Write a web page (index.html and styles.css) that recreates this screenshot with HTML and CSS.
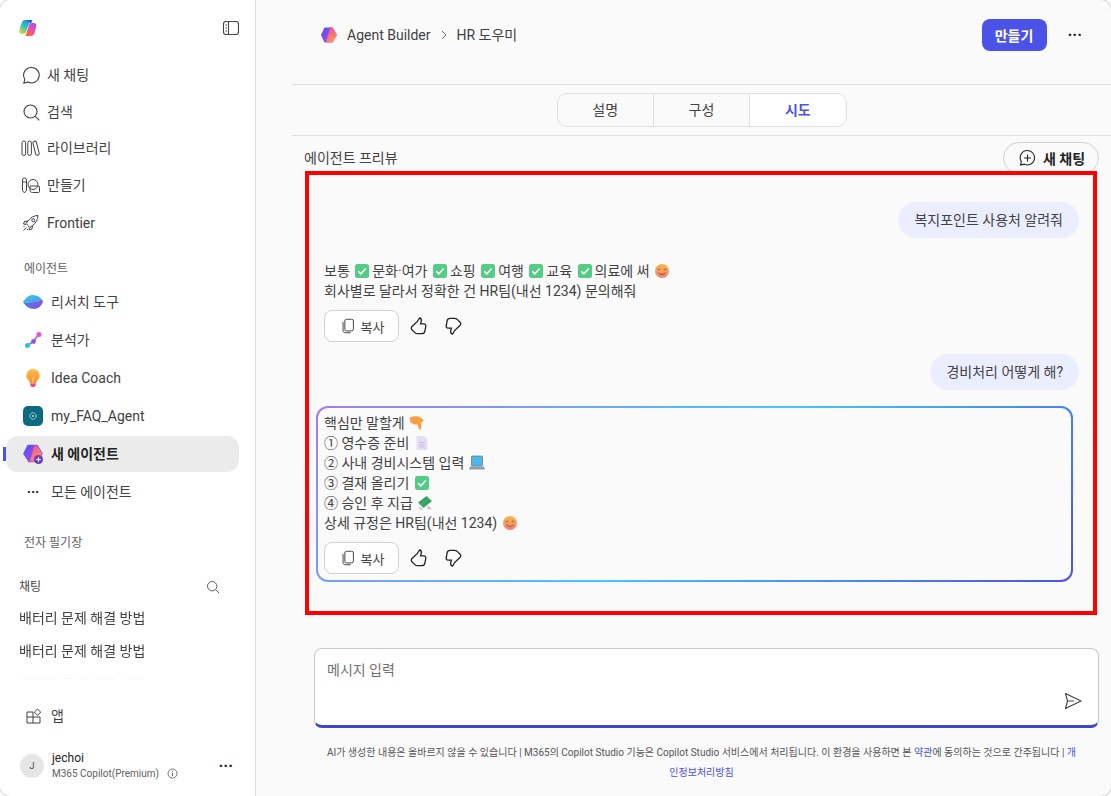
FILE: index.html
```html
<!DOCTYPE html>
<html lang="ko">

<head>
    <meta charset="UTF-8">
    <meta name="viewport" content="width=device-width, initial-scale=1.0">
    <link rel="stylesheet" href="styles.css">
</head>

<body>
    <svg class="defs" width="0" height="0">
        <defs>
            <linearGradient id="gHexA" x1="0" y1="0" x2="1" y2="1">
                <stop offset="0" stop-color="#5b4cf0" />
                <stop offset="1" stop-color="#b04ce8" />
            </linearGradient>
            <linearGradient id="gHexB" x1="0" y1="0" x2="0.6" y2="1">
                <stop offset="0" stop-color="#e83ea8" />
                <stop offset="1" stop-color="#ff9a5a" />
            </linearGradient>
            <linearGradient id="gCoLeft" x1="0.7" y1="0" x2="0.2" y2="1">
                <stop offset="0" stop-color="#1f8fe0" />
                <stop offset="0.5" stop-color="#35c8b8" />
                <stop offset="1" stop-color="#e8d830" />
            </linearGradient>
            <linearGradient id="gCoRight" x1="0.8" y1="0" x2="0.2" y2="1">
                <stop offset="0" stop-color="#a850f0" />
                <stop offset="0.55" stop-color="#f050a0" />
                <stop offset="1" stop-color="#f86a30" />
            </linearGradient>
            <linearGradient id="gLeafTop" x1="0" y1="0" x2="1" y2="1">
                <stop offset="0" stop-color="#35d0e8" />
                <stop offset="1" stop-color="#4f8df0" />
            </linearGradient>
            <linearGradient id="gLeafBot" x1="0" y1="0" x2="1" y2="0">
                <stop offset="0" stop-color="#4f7de8" />
                <stop offset="1" stop-color="#8a4fd8" />
            </linearGradient>
            <linearGradient id="gBulb" x1="0" y1="0" x2="0" y2="1">
                <stop offset="0" stop-color="#ffc24a" />
                <stop offset="1" stop-color="#f58a2e" />
            </linearGradient>
            <linearGradient id="gSmile" x1="0" y1="0" x2="0" y2="1">
                <stop offset="0" stop-color="#fbb848" />
                <stop offset="1" stop-color="#f47e78" />
            </linearGradient>
            <symbol id="check" viewBox="0 0 16 16">
                <rect x="1" y="1" width="14" height="14" rx="2.500" fill="#55cc85" />
                <path d="M4.200 8.200l2.600 2.600 5-5.400" fill="none" stroke="#fff" stroke-width="1.500" />
            </symbol>
            <symbol id="smile" viewBox="0 0 16 16">
                <circle cx="8" cy="8" r="7" fill="url(#gSmile)" />
                <path d="M3.800 6.800c.6-1 1.800-1 2.400 0M9.800 6.800c.6-1 1.800-1 2.400 0" fill="none" stroke="#8a4a28" stroke-width="0.900" />
                <path d="M4.500 9.500c1.600 2.600 5.400 2.600 7 0" fill="none" stroke="#8a4a28" stroke-width="0.900" />
            </symbol>
            <symbol id="pointdown" viewBox="0 0 16 16">
                <path d="M1 2.500C3 1.500 6 1 8.500 1.500c1.800.3 4 1.300 5.200 2.500.8.800.8 2-.2 2.700l-1.200.8-.3 6c-.1 1.300-1.900 1.500-2.300.2L8.500 9.500c-2.200.3-4.800-.2-6-1.400C1 6.800.3 4 1 2.500z" fill="#f8a040" />
            </symbol>
            <symbol id="doc" viewBox="0 0 16 16">
                <path d="M2.500 1h7.500l3.500 3.500V15h-11z" fill="#e4dff2" />
                <path d="M5 7.500h6M5 9.800h6M5 12h6" stroke="#c6bfe0" stroke-width="1" />
            </symbol>
            <symbol id="laptop" viewBox="0 0 16 16">
                <rect x="2.500" y="1" width="11" height="10" rx="1" fill="#4bb8e8" stroke="#5a6c80" stroke-width="0.700" />
                <path d="M1 11.500h14l1 3H0z" fill="#8f9bab" />
            </symbol>
            <symbol id="money" viewBox="0 0 16 16">
                <path d="M10 10l5 3.500-4 1.500zM1.500 11l1.500 4 3.500-.5z" fill="#c3ccd6" />
                <path d="M1 7.500L9.500 1l5.500 5-8.500 7z" fill="#3fa866" />
                <path d="M3.500 8L9.500 3.500M6 10.500l6-4.500" stroke="#2d8a50" stroke-width="0.800" />
            </symbol>
            <symbol id="copy" viewBox="0 0 20 20">
                <rect x="6.500" y="2.500" width="9.500" height="13" rx="2" fill="none" stroke="currentColor" stroke-width="1.100" />
                <path d="M4.500 5.500v9.500c0 1.400 1 2.500 2.500 2.500h6" fill="none" stroke="currentColor" stroke-width="1.100" />
            </symbol>
            <symbol id="thumb" viewBox="0 0 20 20">
                <path d="M10.500 2c1.500.2 2 1.400 1.800 2.900-.1 1-.4 2-.7 3h3.300c1.300 0 2.200 1.100 1.900 2.300l-1 5.300c-.3 1.300-1.300 2.200-2.700 2.200H8.500c-1.100 0-2-.4-2.700-1.100l-2.900-2.900c-.8-.8-.9-2-.1-2.900l3.400-3.300C8.400 5.900 9.500 4 10.500 2z" fill="none" stroke="currentColor" stroke-width="1.300" />
            </symbol>
        </defs>
    </svg>

    <div class="app">
        <aside class="sidebar">
            <div class="side-top">
                <svg class="logo" width="18" height="18" viewBox="0 0 18 18">
                    <path d="M6 1h5.500L7 13c-.5 1.300-1.500 2-3 2H2.500C.8 15 0 13.500.3 12L2 5.500C2.600 2.800 4 1 6 1z" fill="url(#gCoLeft)" />
                    <path d="M7 1h5c.6 0 1.200.3 1.500.8L11.300 5C10.800 3 9 1.500 7 1z" fill="#1a5fd0" />
                    <path d="M11.500 4h3.300c1.900 0 2.800 1.400 2.500 3l-1.500 6.200c-.6 2.500-2 3.800-4 3.800H6.500l3.800-11.500c.2-.7.600-1.300 1.200-1.500z" fill="url(#gCoRight)" />
                </svg>
                <svg class="ic-panel" width="18" height="18" viewBox="0 0 18 18">
                    <rect x="1.500" y="2.500" width="15" height="13" rx="2.500" fill="none" stroke="#424242" stroke-width="1.100" />
                    <path d="M6.500 2.500v13M3.500 6h1.500M3.500 9h1.500M3.500 12h1.500" fill="none" stroke="#424242" stroke-width="1.100" />
                </svg>
            </div>

            <nav class="nav">
                <a class="nav-row">
                    <svg width="20" height="20" viewBox="0 0 20 20"><path d="M10.500 2.500a7.700 7.700 0 1 1-3.400 14.600l-4.300 1 1-3.800a7.700 7.700 0 0 1 6.700-11.800z" fill="none" stroke="#424242" stroke-width="1.100" /></svg>
                    <span>새 채팅</span>
                </a>
                <a class="nav-row">
                    <svg width="20" height="20" viewBox="0 0 20 20"><circle cx="9.500" cy="9.500" r="6.500" fill="none" stroke="#424242" stroke-width="1.100" /><path d="M14.300 14.300l4 4" stroke="#424242" stroke-width="1.100" /></svg>
                    <span>검색</span>
                </a>
                <a class="nav-row">
                    <svg width="20" height="20" viewBox="0 0 20 20"><rect x="1" y="3" width="3.600" height="14.500" rx="1.800" fill="none" stroke="#424242" stroke-width="1" /><rect x="6.800" y="3" width="3.600" height="14.500" rx="1.800" fill="none" stroke="#424242" stroke-width="1" /><rect x="13.200" y="3" width="3.600" height="14.500" rx="1.800" transform="rotate(-14 15 10)" fill="none" stroke="#424242" stroke-width="1" /></svg>
                    <span>라이브러리</span>
                </a>
                <a class="nav-row">
                    <svg width="20" height="20" viewBox="0 0 20 20"><path d="M1.500 5a2 2 0 0 1 4 0v10.500l-2 2.500-2-2.500zM1.500 7h4" fill="none" stroke="#424242" stroke-width="1" /><circle cx="12" cy="9.500" r="5" fill="none" stroke="#424242" stroke-width="1" /><path d="M9 11h8.500c.8 0 1 .5 1 1v4.500c0 .5-.4 1-1 1h-6c-1.500 0-2.500-1-2.500-2.500z" fill="none" stroke="#424242" stroke-width="1" /></svg>
                    <span>만들기</span>
                </a>
                <a class="nav-row nav-frontier">
                    <svg width="20" height="20" viewBox="0 0 20 20"><path d="M7 12.500L5 10.500l2-2.500c2.500-3.500 6-5.500 10-5.500 0 4-2 7.500-5.500 10L9 14.500z" fill="none" stroke="#424242" stroke-width="1" /><circle cx="12.200" cy="7.300" r="1.500" fill="none" stroke="#424242" stroke-width="1" /><path d="M7 8l-3.500.5-1 2.500 2.500.5M11.500 12.500l-.5 3.500-2.500 1-.5-2.500M5.500 14.500l-3 3M3.500 13l-1 1M7 16l-1 1" fill="none" stroke="#424242" stroke-width="1" /></svg>
                    <span>Frontier</span>
                </a>
            </nav>

            <div class="side-label agents-label">에이전트</div>
            <div class="agents">
                <a class="agent-row">
                    <svg width="20" height="20" viewBox="0 0 20 20"><path d="M0 10C3 5.500 6 3 10 3c4 0 7.500 2 10 6-4 0-7 1-10 1.500S3 11 0 10z" fill="url(#gLeafTop)" /><path d="M0 10c3 1 7 .7 10 .2s6-1.200 10-1.200c-1 4-4 8-9 8-5 0-8.500-3-11-7z" fill="url(#gLeafBot)" /></svg>
                    <span>리서치 도구</span>
                </a>
                <a class="agent-row">
                    <svg width="20" height="20" viewBox="0 0 20 20"><path d="M4.500 15.500l6-4 5-7" stroke="#a860e0" stroke-width="1.600" fill="none" /><circle cx="4.500" cy="15.500" r="2.500" fill="#2cc0f0" /><circle cx="10.500" cy="11.500" r="2.400" fill="#9a50d8" /><circle cx="16" cy="4.500" r="2.500" fill="#e850d8" /></svg>
                    <span>분석가</span>
                </a>
                <a class="agent-row">
                    <svg width="20" height="20" viewBox="0 0 20 20"><path d="M10 1a6.500 6.500 0 0 1 3.800 11.800L13 15.500H7l-.8-2.700A6.500 6.500 0 0 1 10 1z" fill="url(#gBulb)" /><path d="M7.200 15.500h5.600v1.500l-1.300 2h-3l-1.300-2z" fill="#e8507a" /><path d="M10 15V9" stroke="#fde0a8" stroke-width="0.800" /></svg>
                    <span>Idea Coach</span>
                </a>
                <a class="agent-row">
                    <svg width="20" height="20" viewBox="0 0 20 20"><rect width="20" height="20" rx="5" fill="#0b6a7e" /><circle cx="10" cy="10" r="3.200" fill="none" stroke="#a8dde6" stroke-width="1" stroke-dasharray="2 0.500" /><circle cx="10" cy="10" r="1" fill="#a8dde6" /></svg>
                    <span>my_FAQ_Agent</span>
                </a>
                <a class="agent-row agent-active">
                    <svg width="20" height="20" viewBox="0 0 20 20"><path d="M5 1.500h9l5 8-4 8H6l-5-8z" fill="url(#gHexA)" stroke="url(#gHexA)" stroke-linejoin="round" stroke-width="1.500" /><path d="M11 1.500h3l5 8-4 8H7z" fill="url(#gHexB)" /><circle cx="15.500" cy="15.500" r="4.500" fill="#6c3ad0" /><path d="M13.200 15.500h4.600M15.500 13.200v4.600" stroke="#fff" stroke-width="1.100" /></svg>
                    <span>새 에이전트</span>
                </a>
                <a class="agent-row">
                    <span class="dots-cell">···</span>
                    <span>모든 에이전트</span>
                </a>
            </div>

            <div class="side-label notes-label">전자 필기장</div>

            <div class="chat-head">
                <span>채팅</span>
                <svg width="14" height="14" viewBox="0 0 14 14"><circle cx="6.200" cy="6.200" r="4.700" fill="none" stroke="#616161" stroke-width="1" /><path d="M9.700 9.700l3.300 3.300" stroke="#616161" stroke-width="1" /></svg>
            </div>
            <div class="chat-list">
                <div class="chat-item">배터리 문제 해결 방법</div>
                <div class="chat-item">배터리 문제 해결 방법</div>
                <div class="chat-item chat-faded">배터리 문제 해결 방법</div>
            </div>

            <a class="apps-row">
                <svg width="16" height="16" viewBox="0 0 16 16"><path d="M1 4h6v5h7v6H1zM1 9h6M7 9v6" fill="none" stroke="#424242" stroke-width="1" /><path d="M11.500 1l3.200 3.200-3.200 3.200-3.200-3.200z" fill="none" stroke="#424242" stroke-width="1" /></svg>
                <span>앱</span>
            </a>

            <div class="user-row">
                <div class="avatar">J</div>
                <div class="user-text">
                    <div class="user-name">jechoi</div>
                    <div class="user-plan">M365 Copilot(Premium)
                        <svg width="11" height="11" viewBox="0 0 11 11"><circle cx="5.500" cy="5.500" r="4.500" fill="none" stroke="#616161" stroke-width="0.900" /><path d="M5.500 5v3M5.500 3v1" stroke="#616161" stroke-width="1" /></svg>
                    </div>
                </div>
                <span class="dots">···</span>
            </div>
        </aside>

        <main class="main">
            <header class="topbar">
                <svg class="crumb-logo" width="18" height="18" viewBox="0 0 18 18"><path d="M4.500 1.500h8l4.500 7.500-4.500 7.500h-8L1 9z" fill="url(#gHexA)" /><path d="M10 1.500h2.500L17 9l-4.500 7.500H6z" fill="url(#gHexB)" /></svg>
                <span class="crumb">Agent Builder</span>
                <svg class="crumb-sep" width="8" height="10" viewBox="0 0 8 10"><path d="M2 1l4 4-4 4" fill="none" stroke="#616161" stroke-width="0.900" /></svg>
                <span class="crumb">HR 도우미</span>
                <button class="btn-create">만들기</button>
                <span class="dots top-dots">···</span>
            </header>

            <div class="tabs-row">
                <div class="tabs">
                    <div class="tab">설명</div>
                    <div class="tab">구성</div>
                    <div class="tab tab-active">시도</div>
                </div>
            </div>

            <div class="preview-head">
                <span>에이전트 프리뷰</span>
                <button class="btn-new">
                    <svg width="18" height="18" viewBox="0 0 18 18"><path d="M9.500 1.500a7.200 7.200 0 1 1-3.200 13.700l-3.800.9.900-3.400A7.200 7.200 0 0 1 9.500 1.500z" fill="none" stroke="#242424" stroke-width="1.100" /><path d="M6 9h7M9.500 5.500v7" stroke="#242424" stroke-width="1.100" /></svg>
                    새 채팅
                </button>
            </div>

            <section class="chat">
                <div class="bubble">복지포인트 사용처 알려줘</div>
                <div class="reply">
                    <p>보통 <svg class="emo"><use href="#check" /></svg>문화·여가 <svg class="emo"><use href="#check" /></svg>쇼핑 <svg class="emo"><use href="#check" /></svg>여행 <svg class="emo"><use href="#check" /></svg>교육 <svg class="emo"><use href="#check" /></svg>의료에 써 <svg class="emo"><use href="#smile" /></svg></p>
                    <p>회사별로 달라서 정확한 건 HR팀(내선 1234) 문의해줘</p>
                    <div class="actions">
                        <button class="btn-copy"><svg width="18" height="18"><use href="#copy" /></svg>복사</button>
                        <svg class="thumb" width="20" height="20"><use href="#thumb" /></svg>
                        <svg class="thumb thumb-down" width="20" height="20"><use href="#thumb" /></svg>
                    </div>
                </div>
                <div class="bubble bubble-2">경비처리 어떻게 해?</div>
                <div class="reply reply-box">
                    <p>핵심만 말할게 <svg class="emo"><use href="#pointdown" /></svg></p>
                    <p>① 영수증 준비 <svg class="emo"><use href="#doc" /></svg></p>
                    <p>② 사내 경비시스템 입력 <svg class="emo"><use href="#laptop" /></svg></p>
                    <p>③ 결재 올리기 <svg class="emo"><use href="#check" /></svg></p>
                    <p>④ 승인 후 지급 <svg class="emo"><use href="#money" /></svg></p>
                    <p>상세 규정은 HR팀(내선 1234) <svg class="emo"><use href="#smile" /></svg></p>
                    <div class="actions">
                        <button class="btn-copy"><svg width="18" height="18"><use href="#copy" /></svg>복사</button>
                        <svg class="thumb" width="20" height="20"><use href="#thumb" /></svg>
                        <svg class="thumb thumb-down" width="20" height="20"><use href="#thumb" /></svg>
                    </div>
                </div>
            </section>

            <div class="composer">
                <div class="placeholder">메시지 입력</div>
                <svg class="send" width="20" height="20" viewBox="0 0 20 20"><path d="M2.500 2.500L18 10 2.500 17.500 4.500 10zM4.500 10H11" fill="none" stroke="#424242" stroke-width="1.100" stroke-linejoin="round" /></svg>
            </div>

            <footer class="legal">
                AI가 생성한 내용은 올바르지 않을 수 있습니다 | M365의 Copilot Studio 기능은 Copilot Studio 서비스에서 처리됩니다. 이 환경을 사용하면 본 <a>약관</a>에 동의하는 것으로 간주됩니다 | <a>개<br>인정보처리방침</a>
            </footer>
        </main>

        <div class="annot"></div>
    </div>
</body>

</html>
```

FILE: styles.css
```css
* {
    box-sizing: border-box;
}

html,
body {
    margin: 0;
    height: 100%;
    background-color: #fff;
}

body {
    font-family: Roboto, "Noto Sans CJK KR", sans-serif;
    font-size: 14px;
    line-height: 20px;
    color: #424242;
    overflow: hidden;
}

p {
    margin: 0;
}

button {
    font-family: inherit;
    cursor: pointer;
}

.defs {
    position: absolute;
}

.app {
    position: relative;
    display: flex;
    width: 1111px;
    height: 796px;
    border-radius: 10px;
    box-shadow: 0 0 0 1px #d8d8d8;
    overflow: hidden;
    background-color: #fafafa;
}

/* sidebar */
.sidebar {
    flex: 0 0 256px;
    display: flex;
    flex-direction: column;
    background-color: #fff;
    border-right: 1px solid #e0e0e0;
}

.side-top {
    display: flex;
    justify-content: space-between;
    align-items: center;
    height: 57px;
    padding: 0 15px 1px 19px;
}

.nav-row {
    display: flex;
    align-items: center;
    gap: 6px;
    height: 36.5px;
    padding-left: 21px;
}

.nav-frontier {
    margin-top: 2px;
}

.side-label {
    margin-left: 24px;
    font-size: 12px;
    line-height: 18px;
    color: #616161;
}

.agents-label {
    margin-top: 18px;
}

.agents {
    display: flex;
    flex-direction: column;
    gap: 2px;
    margin-top: 6px;
}

.agent-row {
    position: relative;
    display: flex;
    align-items: center;
    gap: 8px;
    height: 36px;
    margin: 0 16px 0 6px;
    padding-left: 17px;
    border-radius: 12px;
}

.agent-active {
    background-color: #ebebeb;
    font-weight: 700;
    color: #242424;
}

.agent-active::before {
    content: "";
    position: absolute;
    left: -3px;
    top: 11px;
    width: 3px;
    height: 14px;
    background-color: #4a52e8;
}

.dots-cell {
    width: 20px;
    text-align: center;
    font-weight: 700;
    color: #242424;
}

.notes-label {
    margin-top: 24px;
}

.chat-head {
    display: flex;
    justify-content: space-between;
    align-items: center;
    margin-top: 25px;
    padding: 0 35px 0 19px;
    font-size: 12px;
}

.chat-list {
    height: 84px;
    margin-top: 5px;
    padding-left: 19px;
    -webkit-mask-image: linear-gradient(#000 78%, transparent 94%);
    mask-image: linear-gradient(#000 78%, transparent 94%);
}

.chat-item {
    height: 33px;
    line-height: 33px;
}

.chat-faded {
    opacity: 0.25;
}

.apps-row {
    display: flex;
    align-items: center;
    gap: 9px;
    margin-top: 20px;
    padding-left: 26px;
    height: 20px;
}

.user-row {
    display: flex;
    align-items: center;
    margin-top: 24px;
    padding-left: 20px;
}

.avatar {
    display: flex;
    align-items: center;
    justify-content: center;
    flex: 0 0 24px;
    height: 24px;
    border-radius: 50%;
    background-color: #e6e6e6;
    font-size: 9px;
    color: #424242;
}

.user-text {
    flex: 1;
    margin-left: 8px;
}

.user-name {
    font-size: 12px;
    line-height: 16px;
    color: #242424;
}

.user-plan {
    display: flex;
    align-items: center;
    gap: 8px;
    font-size: 10px;
    line-height: 16px;
    color: #616161;
}

.dots {
    font-weight: 700;
    font-size: 16px;
    color: #242424;
}

.user-row .dots {
    margin-right: 22px;
}

/* main */
.main {
    flex: 1;
    min-width: 0;
    display: flex;
    flex-direction: column;
    padding-left: 36px;
}

.topbar {
    display: flex;
    align-items: center;
    height: 85px;
    padding: 0 29px 15px 28px;
    border-bottom: 1px solid #e0e0e0;
}

.crumb-logo {
    margin-right: 9px;
}

.crumb {
    color: #424242;
}

.crumb-sep {
    margin: 0 9px;
}

.btn-create {
    margin-left: auto;
    width: 65px;
    height: 32px;
    border: none;
    border-radius: 8px;
    background-color: #4a52e8;
    color: #fff;
    font-size: 14px;
    font-weight: 700;
}

.top-dots {
    margin-left: 21px;
}

.tabs-row {
    display: flex;
    justify-content: center;
    height: 51px;
    padding-top: 8px;
    border-bottom: 1px solid #e0e0e0;
}

.tabs {
    display: flex;
    width: 290px;
    height: 34px;
    border: 1px solid #e0e0e0;
    border-radius: 10px;
    overflow: hidden;
}

.tab {
    flex: 1;
    line-height: 32px;
    text-align: center;
    border-right: 1px solid #e0e0e0;
    color: #424242;
}

.tab-active {
    border-right: none;
    background-color: #fff;
    color: #4a52e8;
    font-weight: 700;
}

.preview-head {
    display: flex;
    justify-content: space-between;
    align-items: center;
    margin-top: 6px;
    padding: 0 12px;
}

.btn-new {
    display: flex;
    align-items: center;
    gap: 7px;
    width: 96px;
    height: 32px;
    padding: 0 0 0 14px;
    border: 1px solid #d1d1d1;
    border-radius: 16px;
    background-color: #fafafa;
    color: #242424;
    font-size: 14px;
    font-weight: 700;
}

.chat {
    flex: 1;
    display: flex;
    flex-direction: column;
    padding: 28px 32px 0;
}

.bubble {
    align-self: flex-end;
    padding: 8px 16px;
    border-radius: 18px;
    background-color: #ebeefe;
}

.bubble-2 {
    margin-top: 12px;
}

.reply {
    margin-top: 23px;
}

.reply-box {
    margin: 16px 6px 0 -8px;
    padding: 5px 6px 6px;
    border: 2px solid transparent;
    border-radius: 12px;
    background: linear-gradient(#fafafa, #fafafa) padding-box,
        linear-gradient(137deg, #a67cf0 0%, #45c8fb 50%, #4a52e8 100%) border-box;
}

.emo {
    width: 16px;
    height: 16px;
    margin: 0 2px 0 1px;
    vertical-align: -3px;
}

.actions {
    display: flex;
    align-items: center;
    margin-top: 9px;
    color: #424242;
}

.btn-copy {
    display: flex;
    align-items: center;
    justify-content: center;
    gap: 4px;
    width: 75px;
    height: 32px;
    padding: 0;
    border: 1px solid #d1d1d1;
    border-radius: 8px;
    background-color: #fff;
    color: #424242;
    font-size: 13px;
}

.thumb {
    margin-left: 10px;
    color: #242424;
}

.thumb-down {
    margin-left: 14px;
    transform: scale(-1, -1);
}

.composer {
    display: flex;
    flex-direction: column;
    justify-content: space-between;
    height: 80px;
    margin: 0 12px 15px 22px;
    padding: 11px 15px 14px 12px;
    border: 1px solid #c8c8c8;
    border-bottom: 3px solid #3f46c8;
    border-radius: 8px;
    background-color: #fff;
}

.placeholder {
    color: #707070;
}

.send {
    align-self: flex-end;
}

.legal {
    height: 53px;
    padding: 0 32px;
    font-size: 10px;
    text-align: center;
    white-space: nowrap;
    color: #555;
}

.legal a {
    color: #4a52e8;
}

/* red annotation box drawn over the chat */
.annot {
    position: absolute;
    left: 305px;
    top: 171px;
    width: 792px;
    height: 444px;
    border: 4px solid #f00;
    pointer-events: none;
}
```
